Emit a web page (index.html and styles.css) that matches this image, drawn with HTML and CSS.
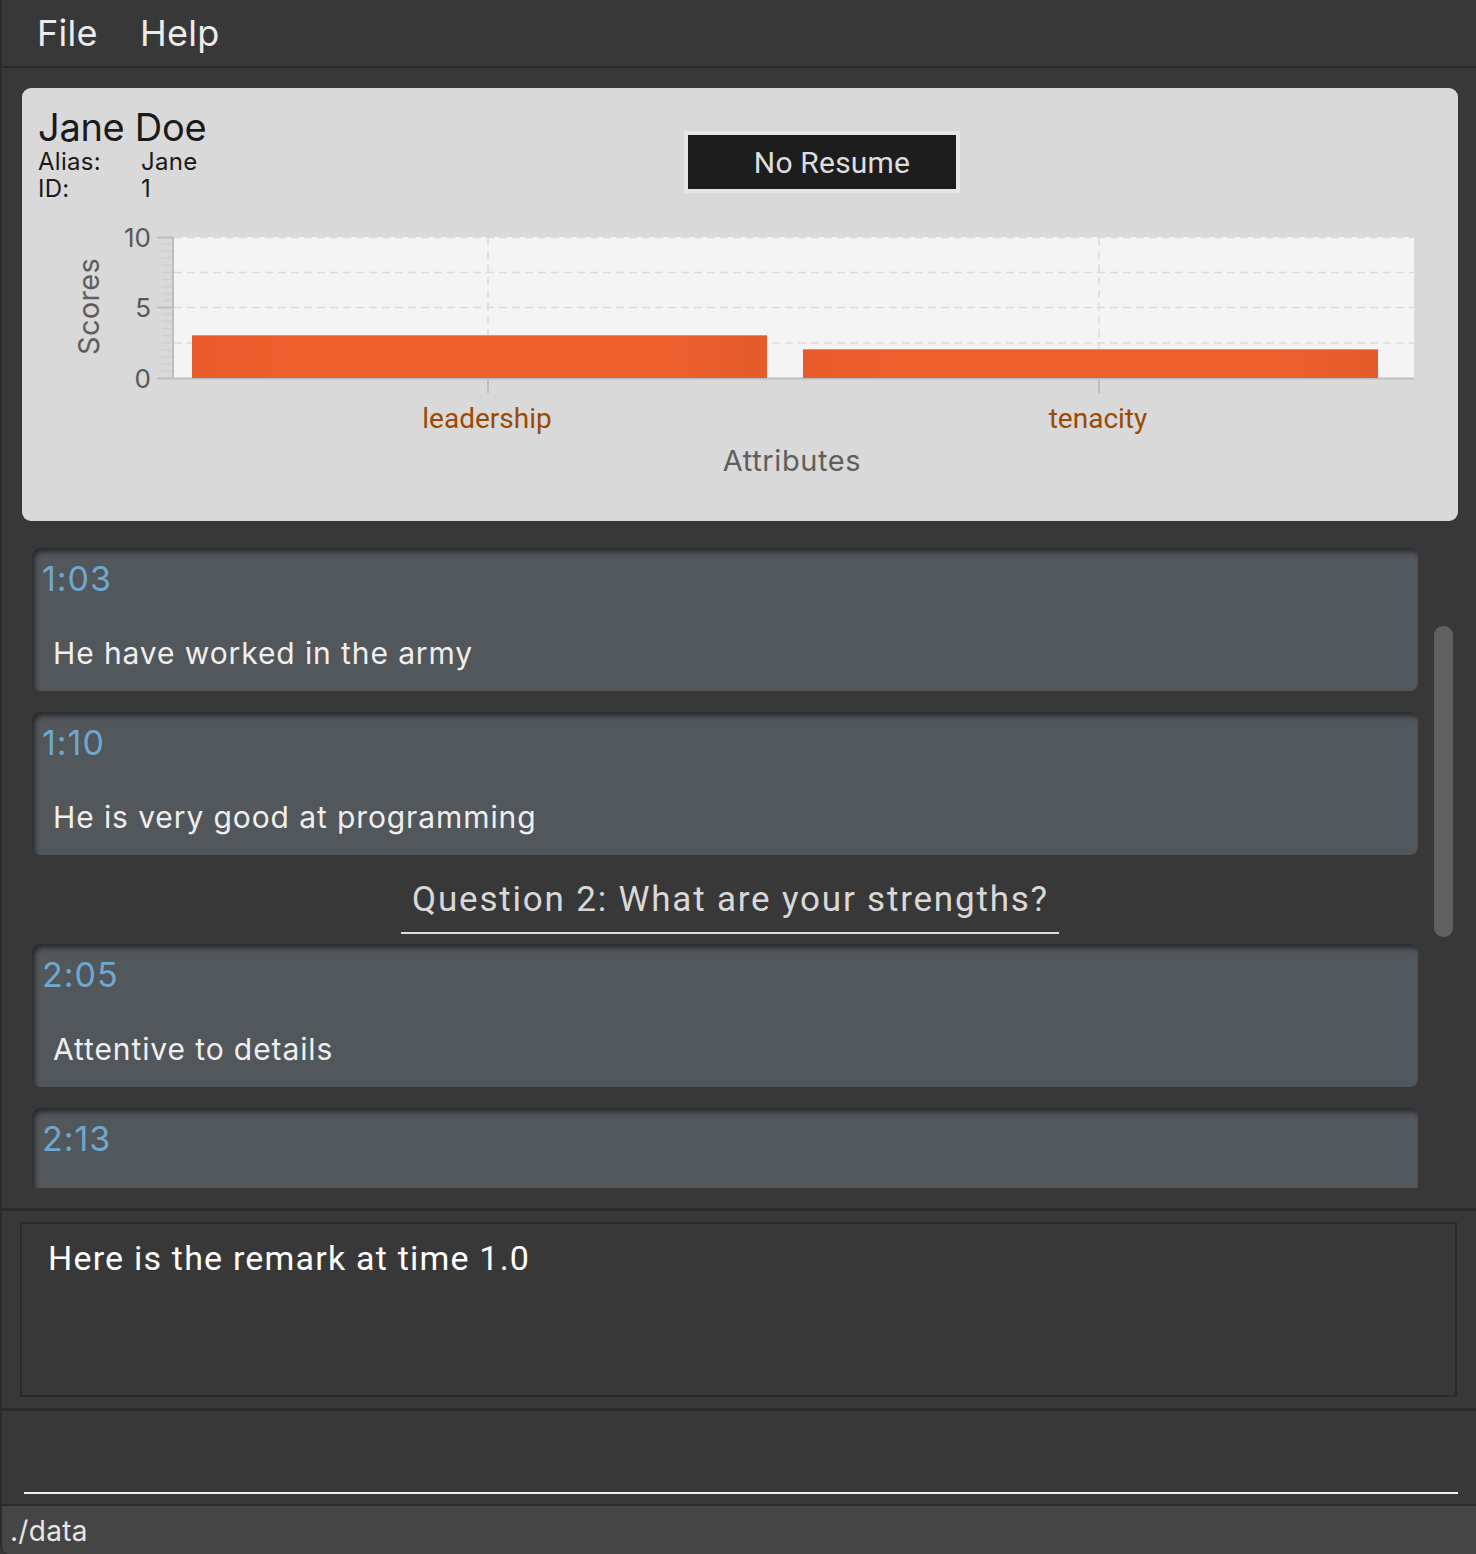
FILE: index.html
```html
<!DOCTYPE html>
<html>
<head>
<meta charset="utf-8">
<link rel="stylesheet" href="styles.css">
</head>
<body>
<div class="app">
  <div class="menubar">
    <span class="menu">File</span>
    <span class="menu">Help</span>
  </div>
  <div class="content">
    <div class="profile">
      <div class="profile-head">
        <div class="ident">
          <div class="name">Jane Doe</div>
          <div class="row"><span class="key">Alias:</span><span class="val">Jane</span></div>
          <div class="row"><span class="key">ID:</span><span class="val">1</span></div>
        </div>
        <div class="resume-btn">No Resume</div>
      </div>
      <svg class="chart" width="1436" height="303" viewBox="22 218 1436 303">
        <rect x="174" y="237" width="1240" height="141" fill="#f4f4f4"/>
        <g class="grid">
          <line x1="174" y1="237.5" x2="1414" y2="237.5" stroke="#dedede"/>
          <line x1="174" y1="272.5" x2="1414" y2="272.5"/>
          <line x1="174" y1="307.5" x2="1414" y2="307.5"/>
          <line x1="174" y1="343" x2="1414" y2="343"/>
          <line x1="488" y1="238" x2="488" y2="378"/>
          <line x1="1099" y1="238" x2="1099" y2="378"/>
        </g>
        <g class="minor-ticks">
          <line x1="162" y1="244" x2="172" y2="244"/>
          <line x1="162" y1="251" x2="172" y2="251"/>
          <line x1="162" y1="258" x2="172" y2="258"/>
          <line x1="162" y1="265" x2="172" y2="265"/>
          <line x1="162" y1="272.5" x2="172" y2="272.5"/>
          <line x1="162" y1="279.5" x2="172" y2="279.5"/>
          <line x1="162" y1="286.5" x2="172" y2="286.5"/>
          <line x1="162" y1="293.5" x2="172" y2="293.5"/>
          <line x1="162" y1="300.5" x2="172" y2="300.5"/>
          <line x1="162" y1="314.5" x2="172" y2="314.5"/>
          <line x1="162" y1="321.5" x2="172" y2="321.5"/>
          <line x1="162" y1="328.5" x2="172" y2="328.5"/>
          <line x1="162" y1="335.5" x2="172" y2="335.5"/>
          <line x1="162" y1="343" x2="172" y2="343"/>
          <line x1="162" y1="350" x2="172" y2="350"/>
          <line x1="162" y1="357" x2="172" y2="357"/>
          <line x1="162" y1="364" x2="172" y2="364"/>
          <line x1="162" y1="371" x2="172" y2="371"/>
        </g>
        <g class="axis">
          <line x1="173" y1="237" x2="173" y2="379"/>
          <line x1="157" y1="237.5" x2="173" y2="237.5"/>
          <line x1="157" y1="307.5" x2="173" y2="307.5"/>
          <line x1="157" y1="378.5" x2="1414" y2="378.5"/>
          <line x1="488" y1="378" x2="488" y2="393"/>
          <line x1="1099" y1="378" x2="1099" y2="393"/>
        </g>
        <defs>
          <linearGradient id="barg" x1="0" x2="1" y1="0" y2="0">
            <stop offset="0" stop-color="#e95b2a"/>
            <stop offset="0.15" stop-color="#ec5f2d"/>
            <stop offset="0.85" stop-color="#ec5f2d"/>
            <stop offset="1" stop-color="#e35a2b"/>
          </linearGradient>
        </defs>
        <rect x="192" y="335" width="575" height="43" fill="url(#barg)"/>
        <line x1="192" y1="335.5" x2="767" y2="335.5" stroke="#f08a66"/>
        <rect x="803" y="349" width="575" height="29" fill="url(#barg)"/>
        <line x1="803" y1="349.5" x2="1378" y2="349.5" stroke="#f08a66"/>
        <text class="tick" x="151" y="247" text-anchor="end">10</text>
        <text class="tick" x="151" y="317" text-anchor="end">5</text>
        <text class="tick" x="151" y="388" text-anchor="end">0</text>
        <text class="axis-title scores" transform="translate(99 306.5) rotate(-90)" text-anchor="middle">Scores</text>
        <text class="cat" x="487" y="428" text-anchor="middle">leadership</text>
        <text class="cat" x="1098" y="428" text-anchor="middle">tenacity</text>
        <text class="axis-title" x="792" y="471" text-anchor="middle">Attributes</text>
      </svg>
    </div>
    <div class="list-pane">
      <div class="list">
        <div class="card">
          <div class="time">1:03</div>
          <div class="remark">He have worked in the army</div>
        </div>
        <div class="card">
          <div class="time">1:10</div>
          <div class="remark">He is very good at programming</div>
        </div>
        <div class="question"><span class="qtext">Question 2: What are your strengths?</span></div>
        <div class="card">
          <div class="time">2:05</div>
          <div class="remark">Attentive to details</div>
        </div>
        <div class="card">
          <div class="time">2:13</div>
          <div class="remark">&nbsp;</div>
        </div>
      </div>
      <div class="scrollbar"><div class="thumb"></div></div>
    </div>
  </div>
  <div class="remark-pane">
    <div class="remark-box">Here is the remark at time 1.0</div>
  </div>
  <div class="command-pane">
    <div class="command-line"></div>
  </div>
  <div class="status">./data</div>
</div>
</body>
</html>
```

FILE: styles.css
```css
html, body {
  margin: 0;
  padding: 0;
  background: #383838;
}
body {
  width: 1476px;
  height: 1554px;
  overflow: hidden;
  font-family: Inter, "Noto Sans", sans-serif;
}
.app {
  width: 1476px;
  height: 1554px;
  box-sizing: border-box;
  border-left: 2px solid #2b2b2b;
  display: flex;
  flex-direction: column;
  background: #383838;
  border-bottom-left-radius: 8px;
  overflow: hidden;
}
.menubar {
  height: 66px;
  border-bottom: 2px solid #2a2a2a;
  display: flex;
  align-items: center;
  padding-left: 35px;
  gap: 42px;
  flex-shrink: 0;
}
.menu {
  font-size: 36px;
  color: #ececec;
  line-height: 66px;
  letter-spacing: 0.3px;
}
.content {
  display: flex;
  flex-direction: column;
  flex-shrink: 0;
}
.profile {
  margin: 20px 18px 0 20px;
  height: 433px;
  background: #d9d9d9;
  border-radius: 9px;
  display: flex;
  flex-direction: column;
  overflow: hidden;
}
.profile-head {
  height: 130px;
  display: flex;
  align-items: flex-start;
  flex-shrink: 0;
}
.ident {
  width: 662px;
  box-sizing: border-box;
  padding: 18px 0 0 16px;
  color: #1a1a1a;
}
.name {
  font-size: 38px;
  line-height: 42px;
  letter-spacing: -0.3px;
}
.row {
  display: flex;
  font-size: 24px;
  line-height: 27px;
  letter-spacing: 0.3px;
}
.key {
  width: 103px;
}
.resume-btn {
  margin-top: 43px;
  box-sizing: content-box;
  width: 248px;
  height: 54px;
  padding-left: 20px;
  border: 4px solid #e6e6e6;
  background: #1d1d1d;
  color: #dedede;
  font-family: Roboto, sans-serif;
  font-size: 30px;
  letter-spacing: 0.2px;
  display: flex;
  align-items: center;
  justify-content: center;
}
.chart {
  display: block;
}
.grid line {
  stroke: #dcdcdc;
  stroke-width: 1.5;
  stroke-dasharray: 8 5;
}
.minor-ticks line {
  stroke: #cfcfcf;
  stroke-width: 1.5;
}
.axis line {
  stroke: #bdbdbd;
  stroke-width: 2;
}
.tick {
  font-family: Inter, sans-serif;
  font-size: 26px;
  fill: #585858;
}
.axis-title {
  font-family: Inter, sans-serif;
  font-size: 29px;
  letter-spacing: 0.6px;
  fill: #5e5e5e;
}
.scores {
  letter-spacing: 0.3px;
}
.cat {
  font-family: Roboto, sans-serif;
  font-size: 28px;
  fill: #9a4a04;
}
.list-pane {
  height: 687px;
  display: flex;
  align-items: flex-start;
  box-sizing: border-box;
  padding-bottom: 20px;
}
.list {
  margin-left: 30px;
  width: 1386px;
  height: 667px;
  overflow: hidden;
  padding-top: 27px;
  box-sizing: border-box;
  display: flex;
  flex-direction: column;
  gap: 21px;
}
.card {
  flex-shrink: 0;
  height: 143px;
  box-sizing: border-box;
  background: #52575b;
  border-radius: 8px;
  box-shadow: inset 3px 4px 5px rgba(0, 0, 0, 0.5);
  padding: 11px 0 0 10px;
}
.time {
  font-size: 34px;
  line-height: 40px;
  letter-spacing: 1px;
  color: #6fa8cf;
}
.remark {
  margin-top: 36px;
  padding-left: 11px;
  font-size: 30px;
  line-height: 36px;
  letter-spacing: 0.9px;
  color: #efefef;
}
.question {
  display: flex;
  justify-content: center;
  margin: 4px 0 -11px;
  padding-left: 10px;
}
.qtext {
  font-family: Roboto, sans-serif;
  font-size: 35px;
  line-height: 40px;
  letter-spacing: 1.8px;
  color: #d8d8d8;
  padding: 0 10px 12px 11px;
  border-bottom: 2px solid #dddddd;
}
.scrollbar {
  margin-left: 16px;
  width: 19px;
  padding-top: 105px;
}
.thumb {
  width: 19px;
  height: 311px;
  border-radius: 9px;
  background: #606060;
}
.remark-pane {
  height: 200px;
  box-sizing: border-box;
  border-top: 3px solid #2a2a2a;
  padding: 11px 19px 11px 18px;
  flex-shrink: 0;
}
.remark-box {
  height: 100%;
  box-sizing: border-box;
  border: 2px solid #2b2b2b;
  padding: 12px 0 0 26px;
  font-family: Roboto, sans-serif;
  font-size: 34px;
  line-height: 44px;
  letter-spacing: 1.2px;
  color: #ffffff;
}
.command-pane {
  height: 96px;
  box-sizing: border-box;
  border-top: 3px solid #2a2a2a;
  padding: 81px 18px 0 22px;
  flex-shrink: 0;
}
.command-line {
  height: 2px;
  background: #f2f2f2;
}
.status {
  flex: 1;
  border-top: 2px solid #2a2a2a;
  background: #454545;
  font-size: 28px;
  line-height: 50px;
  letter-spacing: 0.3px;
  color: #e6e6e6;
  padding-left: 8px;
}
```
